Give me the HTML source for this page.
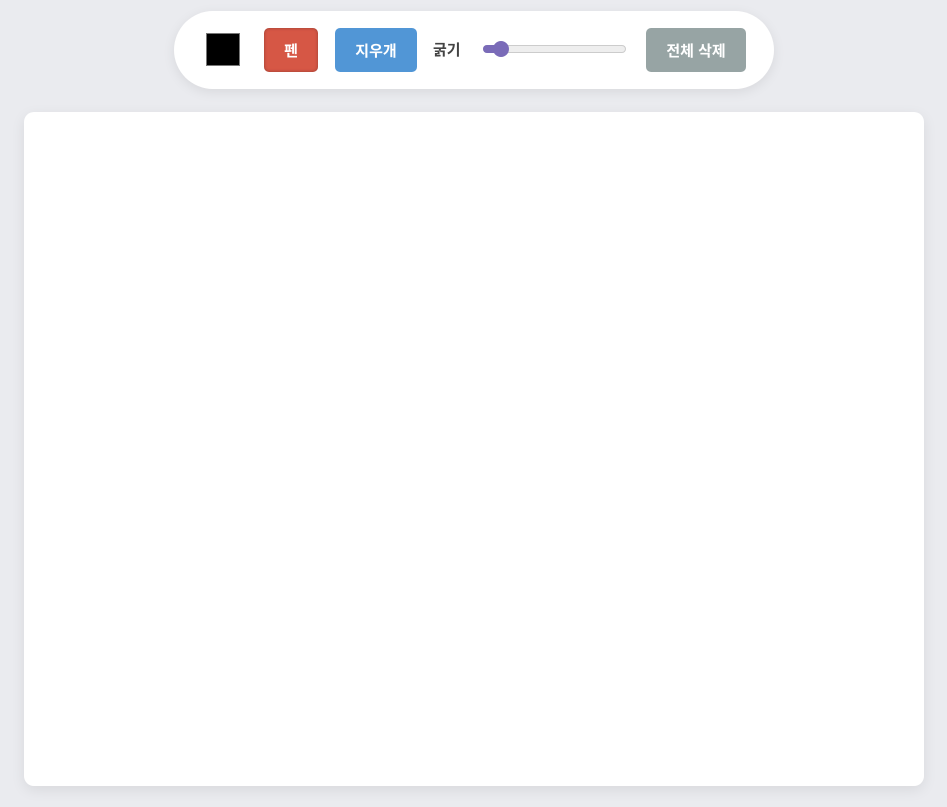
<!DOCTYPE html>
<html><head><meta charset="utf-8"><style>
body{margin:0;width:947px;height:807px;background:#eaebef;font-family:"Liberation Sans","Noto Sans CJK KR",sans-serif;position:relative;overflow:hidden}
.bar{position:absolute;left:174px;top:11px;width:600px;height:78px;background:#fff;border-radius:39px;box-shadow:0 3px 12px rgba(0,0,0,0.08)}
.sw{position:absolute;left:206px;top:33px;width:34px;height:33px;background:#000;border:1px solid #777;box-sizing:border-box}
.btn{position:absolute;top:28px;height:44px;border-radius:5px;color:#fff;font-weight:bold;font-size:15px;display:flex;align-items:center;justify-content:center}
.lbl{position:absolute;left:433px;top:39px;font-size:15px;font-weight:bold;color:#444}
.track{position:absolute;left:483px;top:45px;width:143px;height:8px;background:#eee;border:1px solid #ccc;border-radius:5px;box-sizing:border-box}
.fill{position:absolute;left:483px;top:45px;width:18px;height:8px;background:#7a6bb8;border-radius:5px}
.thumb{position:absolute;left:493px;top:41px;width:16px;height:16px;border-radius:50%;background:#7a6bb8}
.canvas{position:absolute;left:24px;top:112px;width:900px;height:674px;background:#fff;border-radius:10px;box-shadow:0 4px 14px rgba(0,0,0,0.08)}
</style></head><body>
<div class="bar"></div>
<div class="sw"></div>
<div class="btn" style="left:264px;width:54px;background:#d65745;box-shadow:inset 0 0 3px rgba(0,0,0,0.3)">펜</div>
<div class="btn" style="left:335px;width:82px;background:#5196d6">지우개</div>
<div class="lbl">굵기</div>
<div class="track"></div><div class="fill"></div><div class="thumb"></div>
<div class="btn" style="left:646px;width:100px;background:#97a4a4">전체 삭제</div>
<div class="canvas"></div>
</body></html>
